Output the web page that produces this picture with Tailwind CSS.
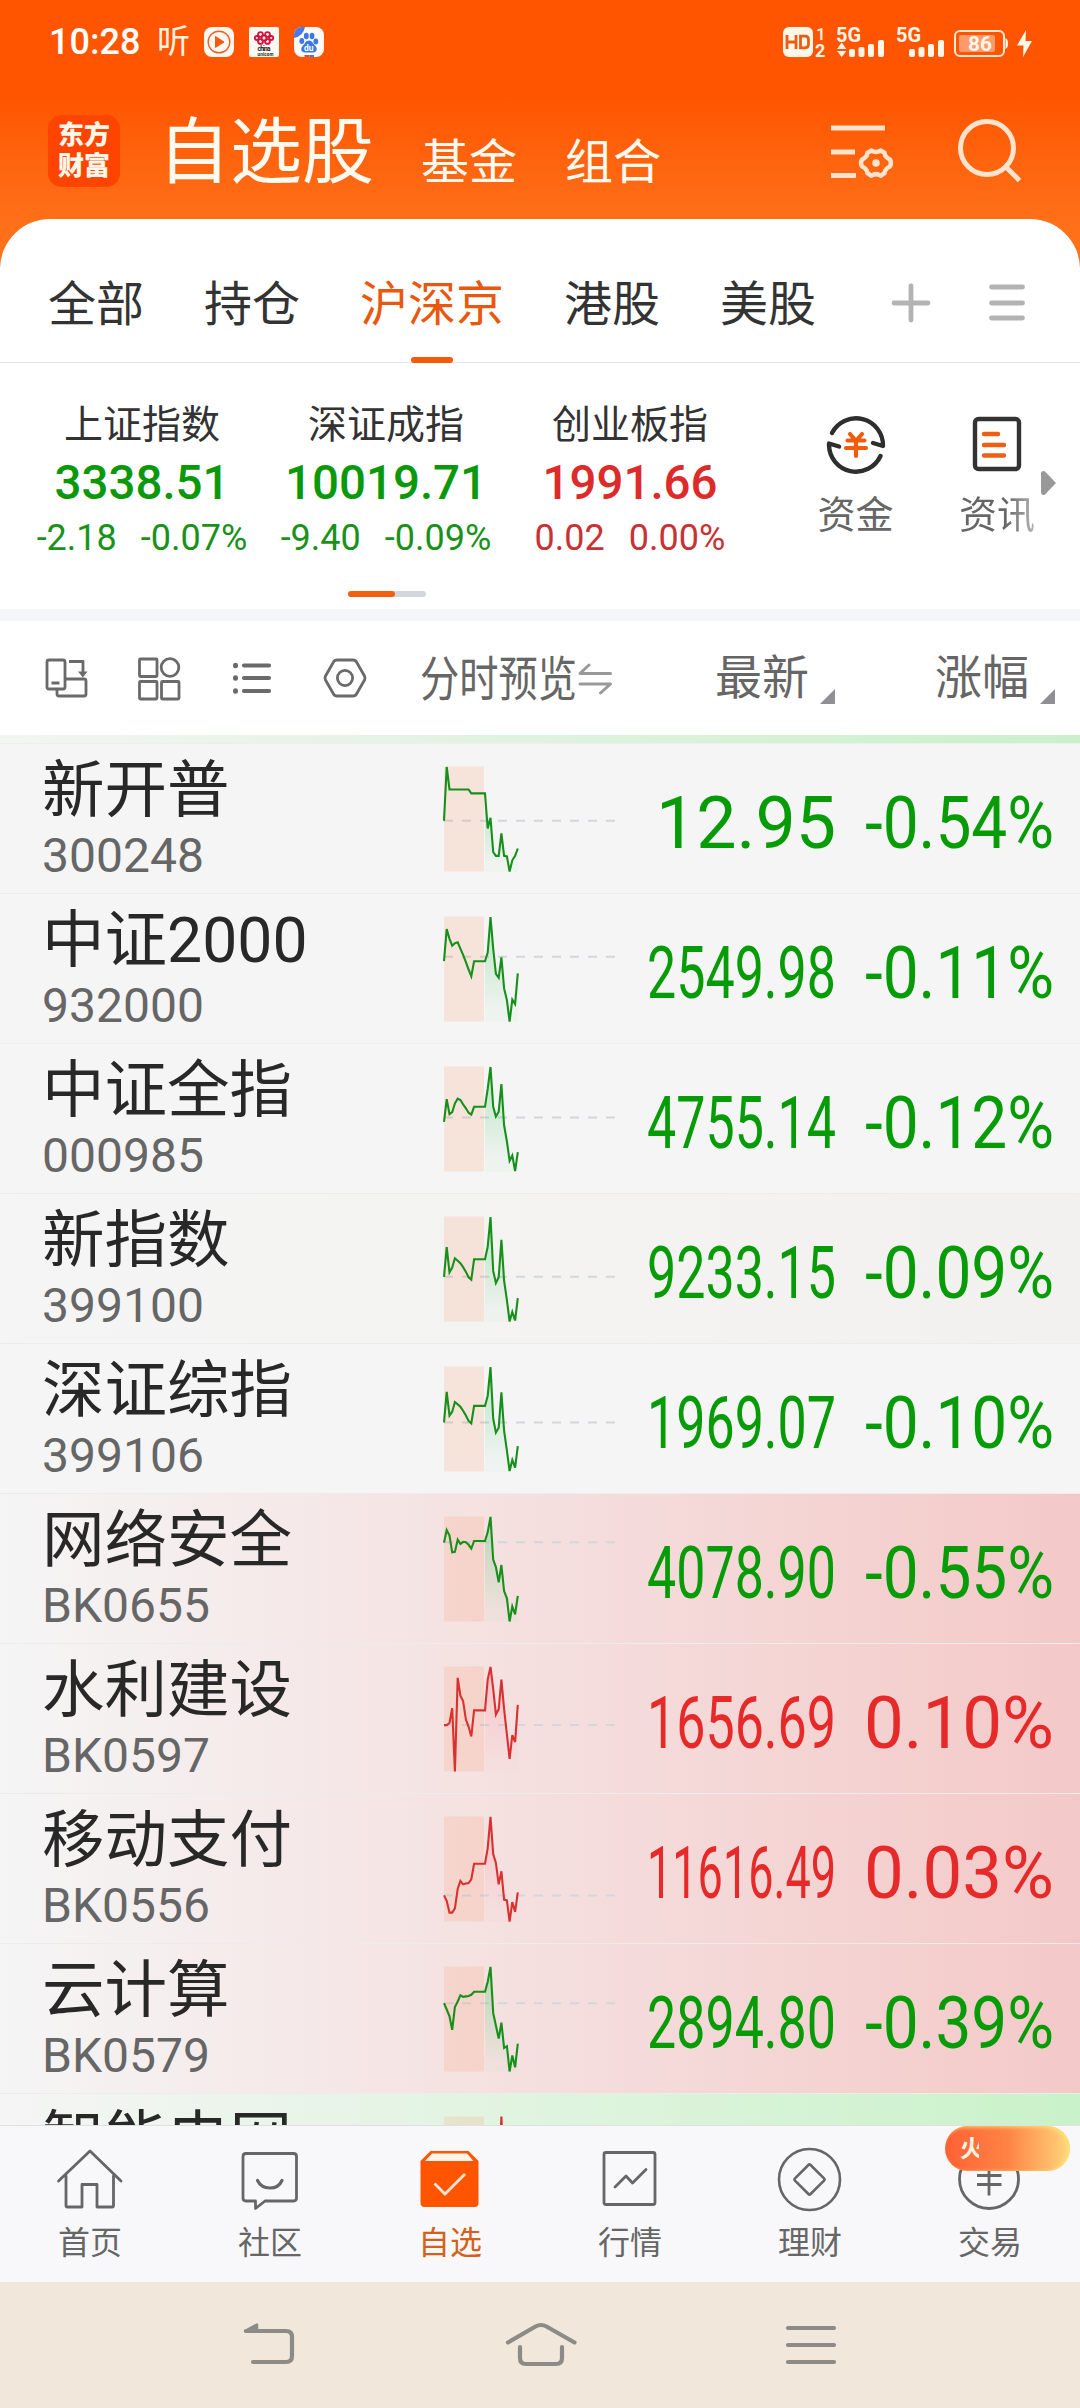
<!DOCTYPE html>
<html lang="zh-CN">
<head>
<meta charset="utf-8">
<title>自选股</title>
<script src="https://cdn.jsdelivr.net/npm/@tailwindcss/browser@4"></script>
</head>
<body class="w-[1080px] h-[2408px] overflow-hidden bg-white font-['Roboto','Noto_Sans_CJK_SC',sans-serif] text-[#333]">
<div class="flex flex-col w-[1080px] h-[2408px] overflow-hidden">

  <!-- header -->
  <div class="h-[267px] shrink-0 bg-linear-to-b from-[#ff5500] from-[36%] to-[#ff7018] to-[84%]">
    <div class="h-[84px] flex items-center justify-between pl-[49px] pr-[48px]">
      <div class="flex items-center">
        <span class="w-[108px] text-[36px] leading-[84px] font-medium text-white">10:28</span>
        <span class="w-[47px] text-[33px] leading-[84px] text-[#fff2e0]">听</span>
        <svg class="w-[120px] h-[30px]" viewBox="204 27 120 30">
          <rect x="204" y="27" width="30" height="30" rx="8" fill="#fff8f0"/>
          <circle cx="219" cy="42" r="10.8" fill="none" stroke="#e8622a" stroke-width="1.4"/>
          <path d="M215.500 36.500l8.500 5.500-8.500 5.500z" fill="#f25a14" stroke="#f25a14" stroke-linejoin="round"/>
          <rect x="249" y="27" width="30" height="30" rx="2" fill="#fffaf5"/>
          <g fill="none" stroke="#d3123f" stroke-width="1.9">
            <circle cx="264" cy="38" r="2.600"/><circle cx="260.500" cy="34.500" r="2.400"/><circle cx="267.500" cy="34.500" r="2.400"/><circle cx="260.500" cy="41.500" r="2.400"/><circle cx="267.500" cy="41.500" r="2.400"/><circle cx="256.800" cy="38" r="2"/><circle cx="271.200" cy="38" r="2"/>
          </g>
          <text x="257.500" y="51.300" font-size="6.500" font-weight="700" textLength="13" fill="#222">china</text>
          <text x="257.500" y="55.500" font-size="4.500" font-weight="700" textLength="16" fill="#222">unicom</text>
          <rect x="294" y="27" width="30" height="30" rx="8" fill="#fffaf5"/>
          <path d="M294 38v-3a8 8 0 0 1 8-8h3a14 14 0 0 1-11 11z" fill="#4a7be0"/>
          <g fill="#3b78e7"><ellipse cx="301.800" cy="41" rx="2.400" ry="3"/><ellipse cx="306.300" cy="36" rx="2.400" ry="3.200"/><ellipse cx="312" cy="36" rx="2.400" ry="3.200"/><ellipse cx="315.800" cy="41.500" rx="2.400" ry="3"/><path d="M309 40.500c3 0 4 3 6 5 3 3 2 7-2 7h-8c-4 0-5-4-2-7 2-2 3-5 6-5z"/></g>
          <path d="M304.500 55h5v2h-5z" fill="#e2463c"/><path d="M309.500 55h4.500v2h-4.500z" fill="#3b78e7"/>
          <text x="304" y="51" font-size="8.500" font-weight="700" fill="#fff">du</text>
        </svg>
      </div>
      <svg class="w-[249px] h-[32px]" viewBox="783 26 249 32" fill="#fff6ea">
        <rect x="783" y="27" width="30" height="30" rx="6"/>
        <path d="M787 35v14M796 35v14M787 42h9M800.500 36.200v11.600h4.500q3.500 0 3.500-3.500v-4.600q0-3.500-3.500-3.500z" fill="none" stroke="#ee5a10" stroke-width="2.800"/>
        <text x="816" y="39.500" font-size="17" font-weight="500">1</text>
        <text x="815" y="57" font-size="18" font-weight="700">2</text>
        <text x="836" y="42" font-size="20" font-weight="700" textLength="25" lengthAdjust="spacingAndGlyphs">5G</text>
        <path d="M837 49l4.700-6.500 4.700 6.500zM837 51l4.700 6 4.700-6z"/>
        <rect x="849" y="49" width="6" height="8" rx="2"/><rect x="858.500" y="47" width="6" height="10" rx="2"/><rect x="868" y="44" width="6" height="13" rx="2"/><rect x="878" y="40" width="6" height="17" rx="2"/>
        <text x="896" y="42" font-size="20" font-weight="700" textLength="25" lengthAdjust="spacingAndGlyphs">5G</text>
        <rect x="909" y="49" width="6" height="8" rx="2"/><rect x="918.500" y="47" width="6" height="10" rx="2"/><rect x="928" y="44" width="6" height="13" rx="2"/><rect x="938" y="40" width="6" height="17" rx="2"/>
        <rect x="955" y="31" width="49" height="25" rx="5" fill="none" stroke="#ffe9d6" stroke-width="2"/>
        <rect x="959" y="35" width="36" height="17" rx="2" fill="#ff9a6a"/>
        <path d="M1005.500 38q2.500 1 2.500 5.500t-2.500 5.500z"/>
        <text x="968" y="51" font-size="21" font-weight="700" textLength="24" lengthAdjust="spacingAndGlyphs">86</text>
        <path d="M1026 30l-9 15.500h6.500L1023 57l9-16h-6.500z"/>
      </svg>
    </div>
    <div class="h-[135px] flex items-start pl-[48px] text-[#fffaf0]">
      <div class="mt-[31px] w-[72px] h-[72px] rounded-[14px] bg-[#ff4400] flex flex-col items-center justify-center text-[26px] leading-[31px] font-black text-[#fff6ea]"><span>东方</span><span>财富</span></div>
      <span class="ml-[38px] mt-[15px] text-[72px] leading-[108px]">自选股</span>
      <span class="ml-[47px] mt-[43px] text-[48px] leading-[72px]">基金</span>
      <span class="ml-[48px] mt-[43px] text-[48px] leading-[72px]">组合</span>
      <svg class="ml-[169px] mt-[33px] w-[191px] h-[66px] shrink-0" viewBox="830 117 191 66" fill="none" stroke="#ffe3cc" stroke-width="5">
        <path d="M831 131h54M831 155h24M831 178.500h25" transform="translate(0,-3)"/>
        <path d="M871.500 150.500 Q876 153.500 880.500 150.500 L884.500 152.800 Q885 157.500 890 159.500 Q891.800 163 890 166.500 Q885 168.500 884.500 173.200 L880.500 175.800 Q876 172.500 871.500 175.800 L867.500 173.200 Q867 168.500 862 166.500 Q860 163 862 159.500 Q867 157.500 867.500 152.800 Z" stroke-width="4.500" stroke-linejoin="round"/>
        <circle cx="876" cy="163" r="3.800" fill="#ffe3cc" stroke="none"/>
        <circle cx="987" cy="148" r="26.500"/><path d="M1006 167l13.500 13.500"/>
      </svg>
    </div>
  </div>

  <!-- market tabs -->
  <div class="-mt-[48px] h-[144px] shrink-0 bg-white rounded-t-[50px] border-b border-[#e4e4e4] flex items-center gap-[60px] px-[48px] text-[48px] leading-[72px] relative">
    <span class="mt-[28px]">全部</span>
    <span class="mt-[28px]">持仓</span>
    <span class="mt-[28px] h-[72px] text-[#e8590f] flex flex-col items-center">沪深京<i class="mt-[16px] w-[42px] h-[6px] shrink-0 rounded-full bg-[#f55a0c]"></i></span>
    <span class="mt-[28px]">港股</span>
    <span class="mt-[28px]">美股</span>
    <svg class="ml-[15px] mt-[25px] w-[140px] h-[40px] shrink-0" viewBox="892 283 140 40" fill="none" stroke="#b3b3b3" stroke-width="4.800" stroke-linecap="round"><path d="M895 303h34M912 286v34M992.500 287h31M992.500 303h31M992.500 318h31"/></svg>
  </div>

  <!-- indices -->
  <div class="h-[246px] shrink-0 flex pl-[20px] relative">
    <div class="w-[244px] pt-[35px] flex flex-col items-center">
      <span class="text-[39px] leading-[54px]">上证指数</span>
      <span class="text-[47.500px] leading-[60px] mt-[1px] font-medium text-[#0b990b]">3338.51</span>
      <span class="text-[36px] leading-[52px] -mt-[1px] text-[#1a921a] flex gap-[24px]"><b class="font-normal">-2.18</b><b class="font-normal">-0.07%</b></span>
    </div>
    <div class="w-[244px] pt-[35px] flex flex-col items-center">
      <span class="text-[39px] leading-[54px]">深证成指</span>
      <span class="text-[47.500px] leading-[60px] mt-[1px] font-medium text-[#0b990b]">10019.71</span>
      <span class="text-[36px] leading-[52px] -mt-[1px] text-[#1a921a] flex gap-[24px]"><b class="font-normal">-9.40</b><b class="font-normal">-0.09%</b></span>
    </div>
    <div class="w-[244px] pt-[35px] flex flex-col items-center">
      <span class="text-[39px] leading-[54px]">创业板指</span>
      <span class="text-[47.500px] leading-[60px] mt-[1px] font-medium text-[#dd2a2a]">1991.66</span>
      <span class="text-[36px] leading-[52px] -mt-[1px] text-[#c93232] flex gap-[24px]"><b class="font-normal">0.02</b><b class="font-normal">0.00%</b></span>
    </div>
    <div class="w-[207px] pt-[50px] flex flex-col items-center text-[#666]">
      <svg class="w-[60px] h-[62px]" viewBox="826 413 60 62" fill="none" stroke="#2e2e2e" stroke-width="4.400" stroke-linejoin="round">
        <path d="M832 433a27 27 0 0 1 51 13l-10-3" stroke-linecap="round"/>
        <path d="M880.500 456a27 27 0 0 1-51.500-11v-1.500l10 3" stroke-linecap="round"/>
        <path d="M850 434l6 7 6-7M847.500 440.500h17M846 448h20M856 441v15" stroke="#f25a0c" stroke-width="4.200" stroke-linecap="round"/>
      </svg>
      <span class="mt-[13px] text-[38px] leading-[54px]">资金</span>
    </div>
    <div class="w-[76px] pt-[50px] flex flex-col items-center text-[#666]">
      <svg class="w-[60px] h-[62px]" viewBox="967 413 60 62" fill="none" stroke="#333" stroke-width="4.400" stroke-linecap="round">
        <rect x="975" y="419" width="44" height="50" rx="3.500"/>
        <path d="M984 434h14M984 445h20M984 455.500h20" stroke="#ee5f14"/>
      </svg>
      <span class="mt-[13px] text-[38px] leading-[54px] bg-linear-to-r from-[#666] from-[60%] to-[#b5b5b5] bg-clip-text text-transparent">资讯</span>
    </div>
    <svg class="ml-[6px] mt-[107px] w-[16px] h-[26px]" viewBox="0 0 16 26"><path d="M0 3Q1 0 4 1.500L15 13 4 24.500Q1 26 0 23z" fill="#999"/></svg>
    <div class="absolute left-[348px] bottom-[12px] w-[78px] h-[6px] rounded-full bg-[#d3d7dc]"><div class="w-[47px] h-[6px] rounded-full bg-[#f2600f]"></div></div>
  </div>
  <div class="h-[12px] shrink-0 bg-[#f5f6fa]"></div>

  <!-- table header -->
  <div class="h-[114px] shrink-0 flex items-center text-[#666] pl-[44px]">
    <svg class="w-[324px] h-[46px] shrink-0" viewBox="45 655 324 46" fill="none" stroke="#6a6a6a" stroke-width="2.800" stroke-linejoin="round">
      <rect x="48" y="660" width="18" height="29" rx="2"/><path d="M52.500 683h8M70 661.500h14v11"/><path d="M79 671.500h9.500l-4.700 6z" fill="#6a6a6a" stroke="none"/><path d="M66 679h19q2 0 2 2v13q0 2-2 2H60q-2 0-2-2v-5"/>
      <rect x="140.500" y="659" width="17.500" height="17.500" rx="1"/><circle cx="171" cy="667.500" r="8.800"/><rect x="140.500" y="681.500" width="17.500" height="17.500" rx="1"/><rect x="162.500" y="681.500" width="17.500" height="17.500" rx="1"/>
      <path d="M245 665.500h25M245 678h25M245 691h25" stroke-width="4.200" stroke-linecap="round"/><path d="M236.500 665.300v.4M236.500 677.800v.4M236.500 690.800v.4" stroke-width="5" stroke-linecap="round"/>
      <path d="M338 660h16q2.500 0 3.500 2l8 14q1 2 0 4l-8 14q-1 2-3.500 2h-16q-2.500 0-3.500-2l-8-14q-1-2 0-4l8-14q1-2 3.500-2z"/><circle cx="346" cy="678" r="7.600"/>
    </svg>
    <svg class="ml-[51px] w-[196px] h-[72px] shrink-0" viewBox="420 640 196 72">
      <text x="421" y="693.500" font-size="48" textLength="157" lengthAdjust="spacingAndGlyphs" fill="#666">分时预览</text>
      <path d="M590 663l-9 8.500h30.500M581 682h30.500l-10 9" fill="none" stroke="#999" stroke-width="3" stroke-linecap="round" stroke-linejoin="round"/>
    </svg>
    <span class="ml-[100px] text-[47px] leading-[72px]">最新</span>
    <svg class="ml-[11px] mt-[36px] w-[15px] h-[15px]" viewBox="0 0 15 15"><path d="M15 0v15H0z" fill="#8f8f94"/></svg>
    <span class="ml-[100px] text-[47px] leading-[72px]">涨幅</span>
    <svg class="ml-[11px] mt-[36px] w-[15px] h-[15px]" viewBox="0 0 15 15"><path d="M15 0v15H0z" fill="#8f8f94"/></svg>
  </div>

  <!-- watch list -->
  <div class="h-[1391px] shrink-0 overflow-hidden border-b border-[#dfe0e2]">
    <div class="h-[9px] bg-linear-to-r from-[#f3f5f3] to-[#caf0ca] border-b border-[#eeeeee]"></div>
    <div id="list" class="flex flex-col"></div>
  </div>

  <!-- tab bar -->
  <div class="h-[156px] shrink-0 bg-[#f8f8fa] grid grid-cols-6 text-[32px] leading-[48px] text-[#666] relative">
    <div class="flex flex-col items-center pt-[19px]">
      <svg class="w-[70px] h-[70px]" viewBox="55 2145 70 70" fill="none" stroke="#666" stroke-width="2.800" stroke-linecap="round" stroke-linejoin="round"><path d="M58.500 2181l31.500-30 31 30M66 2176v29.500q0 1.500 1.500 1.500h14.500v-22.500h15v22.500h15q1.500 0 1.500-1.500V2176"/></svg>
      <span class="mt-[4px]">首页</span></div>
    <div class="flex flex-col items-center pt-[19px]">
      <svg class="w-[70px] h-[70px]" viewBox="235 2145 70 70" fill="none" stroke="#666" stroke-width="2.800" stroke-linejoin="round"><path d="M245.500 2153.500h48q3 0 3 3v41.500q0 3-3 3h-28.500l-9.500 7.500v-7.500h-9.500q-3 0-3-3v-41.500q0-3 3-3z"/><path d="M257.500 2180.500c5 10 20 10 24.500 0" stroke-width="3.200" stroke-linecap="round"/></svg>
      <span class="mt-[4px]">社区</span></div>
    <div class="flex flex-col items-center pt-[19px] text-[#d4601c]">
      <svg class="w-[70px] h-[70px]" viewBox="415 2145 70 70" fill="none"><path d="M420.500 2161l10-10h38l10 10v42q0 4-4 4h-50q-4 0-4-4z" fill="#ff5500"/><path d="M425 2161l7-7.500h35l6.500 7.500z" fill="#fff4ea"/><path d="M434.500 2183.500l10.500 10.500 20-20" stroke="#ffe9d6" stroke-width="2.800"/></svg>
      <span class="mt-[4px]">自选</span></div>
    <div class="flex flex-col items-center pt-[19px]">
      <svg class="w-[70px] h-[70px]" viewBox="595 2145 70 70" fill="none" stroke="#666" stroke-width="2.800" stroke-linejoin="round" stroke-linecap="round"><rect x="604" y="2152.500" width="51" height="52" rx="2"/><path d="M615 2187l11-11 6.500 7 13.500-13.500"/></svg>
      <span class="mt-[4px]">行情</span></div>
    <div class="flex flex-col items-center pt-[19px]">
      <svg class="w-[70px] h-[70px]" viewBox="775 2145 70 70" fill="none" stroke="#666" stroke-width="2.600" stroke-linejoin="round"><circle cx="809.500" cy="2179.500" r="30.500"/><rect x="798.500" y="2168.500" width="22" height="22" rx="1.500" transform="rotate(45 809.500 2179.500)"/></svg>
      <span class="mt-[4px]">理财</span></div>
    <div class="flex flex-col items-center pt-[19px]">
      <svg class="w-[70px] h-[70px]" viewBox="955 2145 70 70" fill="none" stroke="#666" stroke-width="2.800"><circle cx="989" cy="2179" r="29.500"/><path d="M977 2175.500h24.500M977 2184.500h24.500M989 2170v25.500M980 2161l9 10 9-10"/></svg>
      <span class="mt-[4px]">交易</span></div>
    <div class="absolute left-[945px] top-0 w-[125px] h-[45px] rounded-full bg-linear-to-r from-[#ff6034] via-[#ff8345] to-[#ffd57a] shadow-[inset_-3px_1px_4px_#ffe07a] flex items-center pl-[15px]">
      <span class="w-[19px] overflow-hidden text-[24px] leading-[44px] font-bold text-[#fff4e2] whitespace-nowrap">火</span>
    </div>
  </div>

  <!-- system navigation -->
  <div class="h-[126px] shrink-0 bg-[#f1e7db] flex items-center pl-[241px] pr-[241px]">
    <svg class="w-[598px] h-[50px]" viewBox="241 2320 598 50" fill="none" stroke="#8c8b88" stroke-width="4.200" stroke-linecap="round" stroke-linejoin="round">
      <path d="M246 2331h40q6 0 6 6v19q0 6-6 6h-33"/><path d="M245 2331l12-6.500v6z" fill="#8c8b88" stroke-width="2.500"/>
      <path d="M508 2342.500l27.500-16q5.500-3 11 0l28 16M520 2347v11q0 6 6 6h30q6 0 6-6v-11"/>
      <path d="M788 2328h46M788 2345h46M788 2362h46"/>
    </svg>
  </div>
</div>

<script>
// Intraday curves: y samples, offset and height of the plotted range, previous close.
const rows = [
 {n:'新开普', c:'300248', p:'12.95', r:'-0.54%', bg:'bg-[#f5f5f5]', t:55, h:215, b:166, y:[166,56,102,102,102,102,102,102,102,102,110,110,110,110,110,110,182,160,230,238,238,192,238,239,270,247,238,223]},
 {n:'中证2000', c:'932000', p:'2549.98', r:'-0.11%', bg:'bg-[#f5f5f5]', t:364, h:216, b:447, y:[456,390,410,424,419,417,430,443,458,473,487,456,456,456,456,456,438,365,430,482,490,448,512,536,580,535,544,481]},
 {n:'中证全指', c:'000985', p:'4755.14', r:'-0.12%', bg:'bg-[#f5f5f5]', t:674, h:216, b:779, y:[788,741,772,768,750,740,743,752,760,769,773,757,757,757,757,757,720,675,757,777,767,710,795,828,868,857,889,850]},
 {n:'新指数', c:'399100', p:'9233.15', r:'-0.09%', bg:'bg-linear-to-r from-[#f5f5f5] to-[#f2f1ef]', t:983, h:216, b:1107, y:[1107,1046,1098,1088,1069,1074,1079,1087,1097,1108,1113,1071,1071,1071,1071,1071,1045,984,1095,1120,1108,1031,1115,1155,1199,1179,1197,1151]},
 {n:'深证综指', c:'399106', p:'1969.07', r:'-0.10%', bg:'bg-[#f5f5f5]', t:1293, h:216, b:1408, y:[1408,1345,1394,1386,1366,1371,1376,1384,1394,1405,1410,1374,1374,1374,1374,1374,1353,1294,1400,1429,1419,1346,1425,1466,1508,1485,1501,1457]},
 {n:'网络安全', c:'BK0655', p:'4078.90', r:'-0.55%', bg:'bg-linear-to-r from-[#f5f5f5] to-[#f3c9c8]', t:63, h:249, b:124, y:[125,95,108,148,147,118,128,123,124,130,139,121,121,121,121,121,100,64,165,183,219,178,240,257,312,276,295,251]},
 {n:'水利建设', c:'BK0597', p:'1656.69', r:'0.10%', up:1, bg:'bg-linear-to-r from-[#f5f5f5] to-[#f3c9c8]', t:419, h:249, b:558, y:[558,558,553,518,668,446,488,501,545,562,585,523,523,523,523,523,450,420,472,533,520,450,520,580,638,582,598,510]},
 {n:'移动支付', c:'BK0556', p:'11616.49', r:'0.03%', up:1, bg:'bg-linear-to-r from-[#f5f5f5] to-[#f3c9c8]', t:775, h:249, b:962, y:[962,975,1003,1003,993,947,928,936,934,933,924,887,887,887,887,887,850,776,864,885,936,905,972,974,1024,978,1001,955]},
 {n:'云计算', c:'BK0579', p:'2894.80', r:'-0.39%', bg:'bg-linear-to-r from-[#f5f5f5] to-[#f3c9c8]', t:1132, h:249, b:1219, y:[1219,1234,1250,1282,1228,1215,1200,1204,1203,1202,1199,1192,1192,1192,1192,1192,1168,1133,1242,1272,1303,1265,1325,1321,1381,1343,1371,1315]},
 {n:'智能电网', c:'', p:'', r:'', up:1, bg:'bg-linear-to-r from-[#f5f5f5] to-[#c9f2c9]', t:0, h:100, b:60, y:[60,60,60,60,60,60,60,60,60,60,60,60,60,60,60,60,60,60,60,60,60,0,60,60,60,60,60,60]}
];
document.getElementById('list').innerHTML = rows.map((d, i) => {
  const Y = v => (22.5 + (v - d.t) / d.h * 105).toFixed(1);
  const pts = d.y.map((v, k) => (1 + k * 2.733).toFixed(1) + ',' + Y(v));
  const line = d.up ? '#d93030' : '#16901a', text = d.up ? '#e62a2a' : '#079c07';
  return `<div class="h-[150px] shrink-0 border-b border-[#ececec] flex ${d.bg}">
    <div class="w-[443px] pl-[42px] flex flex-col">
      <span class="text-[62.5px] leading-[88px] h-[88px] pt-[3px] text-[#282828] whitespace-nowrap">${d.n}</span>
      <span class="text-[48px] leading-[48px] text-[#666]">${d.c}</span>
    </div>
    <svg class="w-[180px] h-[149px]" viewBox="0 0 180 149">
      <defs><linearGradient id="g${i}" x1="0" y1="0" x2="0" y2="1"><stop offset="0" stop-color="${d.up ? '#ff8090' : '#30c050'}" stop-opacity=".3"/><stop offset=".9" stop-color="${d.up ? '#ff8090' : '#30c050'}" stop-opacity=".03"/></linearGradient></defs>
      <path d="M1 ${Y(d.b)}H172" stroke="#d3d6dd" stroke-width="2" stroke-dasharray="9 9"/>
      <rect x="1" y="22.5" width="40" height="105" fill="#ff8040" fill-opacity=".14"/>
      <path d="M42 127.5L${pts.slice(15).join('L')}V127.5Z" fill="url(#g${i})"/>
      <polyline points="${pts.join(' ')}" fill="none" stroke="${line}" stroke-width="2.1"/>
    </svg>
    <svg class="w-[457px] h-[149px]" viewBox="623 0 457 149" font-size="72" fill="${text}">
      ${d.p ? `<text x="${d.p.length > 5 ? 647 : 656}" y="103.5" textLength="${d.p.length > 5 ? 189 : 180}" lengthAdjust="spacingAndGlyphs">${d.p}</text>` : ''}
      ${d.r ? `<text x="${d.up ? 864 : 865}" y="103.5" textLength="${d.up ? 190 : 189}" lengthAdjust="spacingAndGlyphs">${d.r}</text>` : ''}
    </svg>
  </div>`;
}).join('');
</script>
</body>
</html>
